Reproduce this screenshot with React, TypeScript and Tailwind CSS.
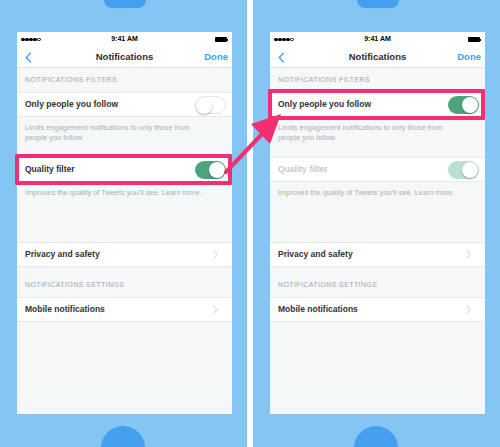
import React from "react";

type Mode = "before" | "after";

const Toggle = ({ state }: { state: "on" | "off" | "faded" }) => {
  const track =
    state === "on"
      ? "bg-[#4da47a]"
      : state === "faded"
        ? "bg-[#b9e1d0]"
        : "bg-white border border-[#e2e4e6]";
  return (
    <div className={`relative h-[18px] w-[31px] rounded-full ${track}`}>
      <div
        className={`absolute top-[1px] h-[16px] w-[16px] rounded-full bg-white shadow-[0_1px_2px_rgba(0,0,0,0.3)] ${
          state === "off" ? "left-[0px] top-[0px]" : "right-[1px]"
        }`}
      />
    </div>
  );
};

const Chevron = () => (
  <svg width="5" height="9" viewBox="0 0 5 9" className="mr-[8px]">
    <polyline points="0.7,0.7 4.2,4.5 0.7,8.3" fill="none" stroke="#c8ccd1" strokeWidth="1" />
  </svg>
);

const Highlight = () => (
  <div className="absolute -left-[2px] right-0 -top-[4px] -bottom-[4px] border-4 border-[#f2306f] rounded-[1px]" />
);

const Row = ({
  label,
  right,
  faded,
  highlight,
}: {
  label: string;
  right: React.ReactNode;
  faded?: boolean;
  highlight?: boolean;
}) => (
  <div className="relative flex h-[25px] shrink-0 items-center justify-between border-y border-[#e8ebee] bg-white pl-[8px] pr-[6px]">
    <span className={`text-[8.5px] font-bold ${faded ? "text-[#c4c9ce]" : "text-[#2f3235]"}`}>{label}</span>
    {right}
    {highlight && <Highlight />}
  </div>
);

const Header = ({ text, className }: { text: string; className: string }) => (
  <div className={`flex shrink-0 pl-[8px] text-[7px] tracking-[0.4px] text-[#9fa7af] ${className}`}>{text}</div>
);

const StatusBar = () => (
  <div className="relative flex h-[15px] items-center justify-between px-[4px]">
    <div className="flex gap-[0.5px]">
      {[0, 1, 2, 3].map((i) => (
        <span key={i} className="h-[3.5px] w-[3.5px] rounded-full bg-black" />
      ))}
      <span className="h-[3.5px] w-[3.5px] rounded-full border-[0.7px] border-black" />
    </div>
    <span className="absolute left-0 right-0 text-center text-[7px] font-bold text-black">9:41 AM</span>
    <div className="flex items-center">
      <span className="h-[5px] w-[12px] rounded-[1px] bg-black" />
      <span className="h-[2px] w-[1px] bg-black" />
    </div>
  </div>
);

const NavBar = () => (
  <div className="relative flex h-[21px] items-center justify-between border-b border-[#e3e6e9] pl-[8px] pr-[4px]">
    <svg width="7" height="11" viewBox="0 0 7 11">
      <polyline points="5.8,0.8 1.2,5.5 5.8,10.2" fill="none" stroke="#3d9ff0" strokeWidth="1.3" />
    </svg>
    <span className="absolute left-0 right-0 text-center text-[9.5px] font-bold text-[#2b2e31]">Notifications</span>
    <span className="text-[9.5px] font-bold text-[#3d9ff0]">Done</span>
  </div>
);

const Phone = ({ mode }: { mode: Mode }) => {
  const after = mode === "after";
  return (
    <div className="flex h-[447px] w-[247px] flex-col overflow-hidden bg-[#84c5f4] pl-[17px]">
      <div className="ml-[87px] h-[8px] w-[42px] shrink-0 rounded-b-full bg-[#42a0ee]" />
      <div className="mt-[24px] flex h-[382px] w-[215px] shrink-0 flex-col bg-[#f5f7f9]">
        <div className="shrink-0 bg-white">
          <StatusBar />
          <NavBar />
        </div>
        <Header text="NOTIFICATIONS FILTERS" className="h-[24px] items-center" />
        <Row
          label="Only people you follow"
          right={<Toggle state={after ? "on" : "off"} />}
          highlight={after}
        />
        <div className="h-[40px] shrink-0 pl-[8px] pt-[6px] text-[7.4px] leading-[10px] text-[#a9b0b7]">
          Limits engagement notifications to only those from
          <br />
          people you follow
        </div>
        <Row
          label="Quality filter"
          right={<Toggle state={after ? "faded" : "on"} />}
          faded={after}
          highlight={!after}
        />
        <div className="h-[60px] shrink-0 pl-[8px] pt-[6px] text-[7.4px] leading-[10px] text-[#a9b0b7]">
          Improves the quality of Tweets you’ll see. Learn more.
        </div>
        <Row label="Privacy and safety" right={<Chevron />} />
        <Header text="NOTIFICATIONS SETTINGS" className="h-[30px] items-end pb-[7px]" />
        <Row label="Mobile notifications" right={<Chevron />} />
      </div>
      <div className="ml-[84px] mt-[12px] h-[44px] w-[44px] shrink-0 rounded-full bg-[#42a0ee]" />
    </div>
  );
};

export default function App() {
  return (
    <div className="relative flex h-[447px] w-[500px] overflow-hidden bg-white font-['Liberation_Sans',Arial,sans-serif]">
      <Phone mode="before" />
      <div className="w-[6px] bg-white" />
      <Phone mode="after" />
      <svg className="pointer-events-none absolute inset-0" width="500" height="447" viewBox="0 0 500 447">
        <line x1="226" y1="172" x2="262" y2="134" stroke="#f2306f" strokeWidth="4" strokeLinecap="round" />
        <polygon points="281,114 251,124 270,144" fill="#f2306f" />
      </svg>
    </div>
  );
}
